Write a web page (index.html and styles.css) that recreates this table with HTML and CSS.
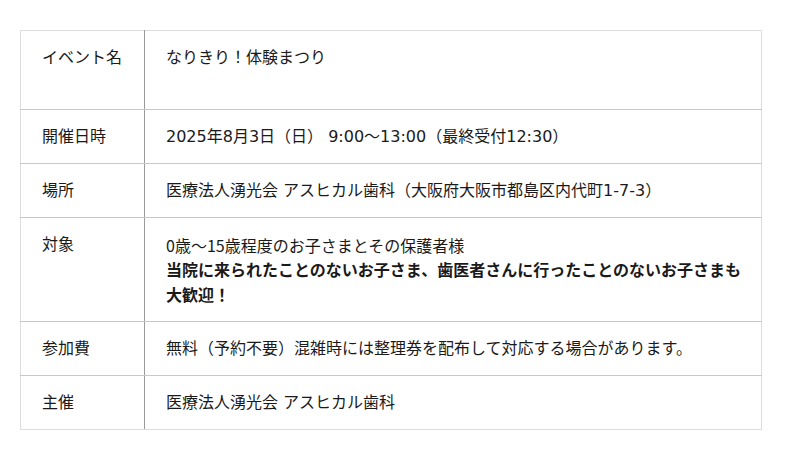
FILE: index.html
```html
<!DOCTYPE html>
<html lang="ja">
<head>
<meta charset="utf-8">
<link rel="stylesheet" href="styles.css">
</head>
<body>
<div class="wrap">
<table class="info">
  <tr class="tall">
    <th>イベント名</th>
    <td>なりきり！体験まつり</td>
  </tr>
  <tr>
    <th>開催日時</th>
    <td>2025年8月3日（日） 9:00〜13:00（最終受付12:30）</td>
  </tr>
  <tr>
    <th>場所</th>
    <td>医療法人湧光会 アスヒカル歯科（大阪府大阪市都島区内代町1-7-3）</td>
  </tr>
  <tr>
    <th>対象</th>
    <td><span class="small">0歳〜15歳程度のお子さまとその保護者様</span><strong class="lead">当院に来られたことのないお子さま、歯医者さんに行ったことのないお子さまも大歓迎！</strong></td>
  </tr>
  <tr>
    <th>参加費</th>
    <td>無料（予約不要）混雑時には整理券を配布して対応する場合があります。</td>
  </tr>
  <tr>
    <th>主催</th>
    <td>医療法人湧光会 アスヒカル歯科</td>
  </tr>
</table>
</div>
</body>
</html>
```

FILE: styles.css
```css
html, body {
  margin: 0;
  padding: 0;
  background: #fff;
}
body {
  font-family: "DejaVu Sans", "Noto Sans CJK JP", sans-serif;
  font-size: 16px;
  color: #1a1a1a;
}
.wrap {
  padding: 30px 38px 0 20px;
}
.info {
  width: 742px;
  border-collapse: collapse;
  border: 1px solid #ddd;
  table-layout: fixed;
}
.info th,
.info td {
  text-align: left;
  vertical-align: top;
  font-weight: normal;
  line-height: 26px;
  padding: 14px 12px 13px 21px;
  border-bottom: 1px solid #c8c8c8;
}
.info th {
  width: 90px;
  border-right: 1px solid #999;
}
.info tr:last-child th,
.info tr:last-child td {
  border-bottom: 1px solid #ddd;
}
.info tr.tall th,
.info tr.tall td {
  padding-bottom: 38px;
}
.small {
  display: block;
  height: 26px;
  font-family: "Noto Sans CJK JP", sans-serif;
  font-size: 16px;
}
.lead {
  display: block;
  font-weight: bold;
  line-height: 25px;
}
```
